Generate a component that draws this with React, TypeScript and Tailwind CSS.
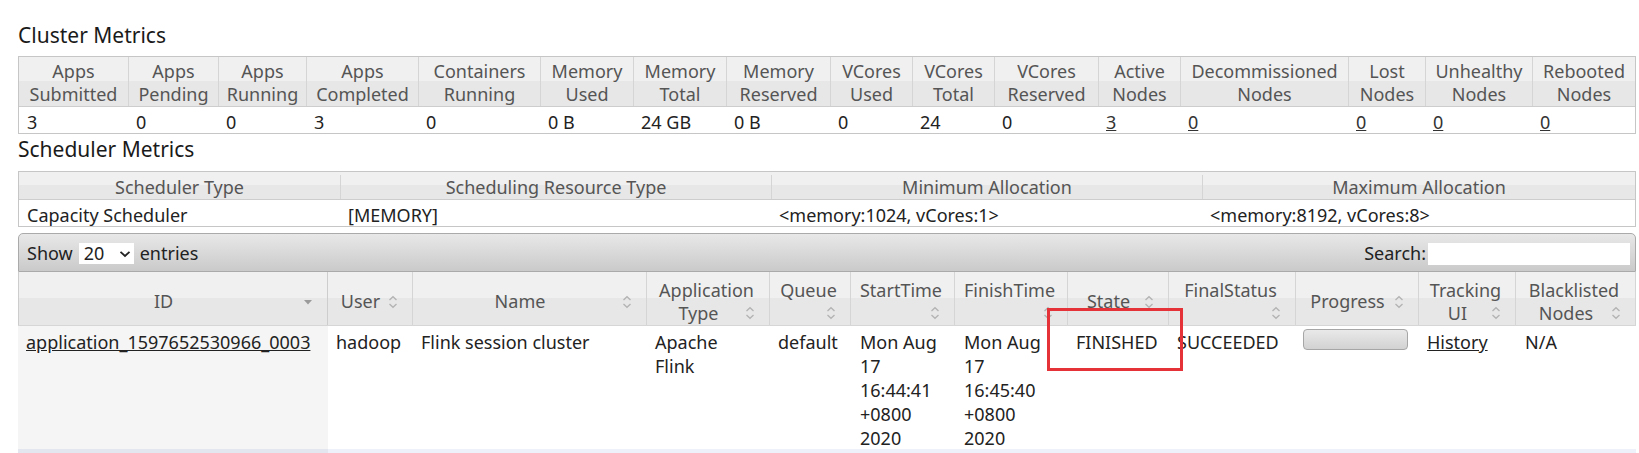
import React from "react";

const SortIcon = () => (
  <svg width="16" height="16" viewBox="0 0 16 16" className="shrink-0">
    <path d="M4.5 6 L8 2.7 L11.5 6" fill="none" stroke="#b3b3b3" strokeWidth="1.3" />
    <path d="M4.5 10 L8 13.3 L11.5 10" fill="none" stroke="#b3b3b3" strokeWidth="1.3" />
  </svg>
);

const SortDesc = () => (
  <svg width="16" height="16" viewBox="0 0 16 16" className="shrink-0">
    <path d="M4 6 L12 6 L8 10.5 Z" fill="#9a9a9a" />
  </svg>
);

const clusterHeads: [string, string][] = [
  ["Apps", "Submitted"],
  ["Apps", "Pending"],
  ["Apps", "Running"],
  ["Apps", "Completed"],
  ["Containers", "Running"],
  ["Memory", "Used"],
  ["Memory", "Total"],
  ["Memory", "Reserved"],
  ["VCores", "Used"],
  ["VCores", "Total"],
  ["VCores", "Reserved"],
  ["Active", "Nodes"],
  ["Decommissioned", "Nodes"],
  ["Lost", "Nodes"],
  ["Unhealthy", "Nodes"],
  ["Rebooted", "Nodes"],
];

const clusterVals: { v: string; link?: boolean }[] = [
  { v: "3" },
  { v: "0" },
  { v: "0" },
  { v: "3" },
  { v: "0" },
  { v: "0 B" },
  { v: "24 GB" },
  { v: "0 B" },
  { v: "0" },
  { v: "24" },
  { v: "0" },
  { v: "3", link: true },
  { v: "0", link: true },
  { v: "0", link: true },
  { v: "0", link: true },
  { v: "0", link: true },
];

type Head =
  | { kind: "single"; text: string; sorted?: boolean }
  | { kind: "double"; l1: string; l2: string };

const appHeads: Head[] = [
  { kind: "single", text: "ID", sorted: true },
  { kind: "single", text: "User" },
  { kind: "single", text: "Name" },
  { kind: "double", l1: "Application", l2: "Type" },
  { kind: "double", l1: "Queue", l2: "" },
  { kind: "double", l1: "StartTime", l2: "" },
  { kind: "double", l1: "FinishTime", l2: "" },
  { kind: "single", text: "State" },
  { kind: "double", l1: "FinalStatus", l2: "" },
  { kind: "single", text: "Progress" },
  { kind: "double", l1: "Tracking", l2: "UI" },
  { kind: "double", l1: "Blacklisted", l2: "Nodes" },
];

export default function App() {
  return (
    <div className="min-h-screen bg-white font-['Noto_Sans',sans-serif] text-[18px] text-[#222] pl-[18px] pt-[21px]">
      {/* Cluster Metrics */}
      <div className="h-[28px] leading-[28px] text-[21px] text-[#1a1a1a] mb-[7px]">Cluster Metrics</div>
      <div className="w-[1618px] border border-[#c6c6c6]">
        <div className="grid grid-cols-[109px_90px_88px_112px_122px_93px_93px_104px_82px_82px_104px_82px_168px_77px_107px_103px] h-[50px] border-b border-[#cdcdcd] bg-[linear-gradient(#f0f0f0_50%,#e7e7e7_50%)] text-[#555]">
          {clusterHeads.map((h, i) => (
            <div
              key={i}
              className={
                i > 0
                  ? "flex flex-col items-center justify-center leading-[23px] pt-[2px] border-l border-[#d5d5d5] whitespace-nowrap"
                  : "flex flex-col items-center justify-center leading-[23px] pt-[2px] whitespace-nowrap"
              }
            >
              <span>{h[0]}</span>
              <span>{h[1]}</span>
            </div>
          ))}
        </div>
        <div className="grid grid-cols-[109px_90px_88px_112px_122px_93px_93px_104px_82px_82px_104px_82px_168px_77px_107px_103px] h-[26px] leading-[24px]">
          {clusterVals.map((c, i) => (
            <div key={i} className="pl-[8px] pt-[3px] whitespace-nowrap">
              {c.link ? <span className="underline text-[#333]">{c.v}</span> : c.v}
            </div>
          ))}
        </div>
      </div>

      {/* Scheduler Metrics */}
      <div className="h-[28px] leading-[28px] pt-[1px] text-[21px] text-[#1a1a1a] mb-[9px]">Scheduler Metrics</div>
      <div className="w-[1618px] border border-[#c6c6c6]">
        <div className="grid grid-cols-[321px_431px_431px_433px] h-[28px] border-b border-[#cdcdcd] bg-[linear-gradient(#f0f0f0_50%,#e7e7e7_50%)] text-[#555] leading-[24px] pt-[3px]">
          <div className="text-center">Scheduler Type</div>
          <div className="text-center border-l border-[#d5d5d5]">Scheduling Resource Type</div>
          <div className="text-center border-l border-[#d5d5d5]">Minimum Allocation</div>
          <div className="text-center border-l border-[#d5d5d5]">Maximum Allocation</div>
        </div>
        <div className="grid grid-cols-[321px_431px_431px_433px] h-[26px] leading-[24px]">
          <div className="pl-[8px] pt-[3px]">Capacity Scheduler</div>
          <div className="pl-[8px] pt-[3px]">[MEMORY]</div>
          <div className="pl-[8px] pt-[3px]">&lt;memory:1024, vCores:1&gt;</div>
          <div className="pl-[8px] pt-[3px]">&lt;memory:8192, vCores:8&gt;</div>
        </div>
      </div>

      {/* Applications table */}
      <div className="relative w-[1618px] mt-[6px]">
        <div className="h-[39px] rounded-t-[5px] border border-[#aaaaaa] bg-[linear-gradient(#e8e8e8,#cacaca)] flex items-center justify-between pl-[8px] pr-[5px] pt-[2px]">
          <div className="flex items-center">
            <span>Show</span>
            <div className="ml-[6px] mr-[6px] w-[55px] h-[21px] bg-white flex items-center pl-[5px] leading-[21px]">
              <span>20</span>
              <svg width="12" height="8" viewBox="0 0 12 8" className="ml-[15px]">
                <path d="M1.5 1.8 L6 6 L10.5 1.8" fill="none" stroke="#222" strokeWidth="1.8" />
              </svg>
            </div>
            <span>entries</span>
          </div>
          <div className="flex items-center">
            <span>Search:</span>
            <div className="ml-[2px] w-[202px] h-[22px] bg-white" />
          </div>
        </div>

        <div className="grid grid-cols-[310px_85px_234px_123px_81px_104px_113px_101px_127px_123px_97px_120px] h-[54px] bg-[linear-gradient(#f0f0f0_50%,#e7e7e7_50%)] text-[#555] border-b border-[#d6d6d6]">
          {appHeads.map((h, i) => {
            const cellCls =
              i === 0
                ? "border-l border-r border-[#cdcdcd] h-full pl-[8px] pr-[11px] pt-[6px]"
                : "border-r border-[#d5d5d5] h-full pl-[8px] pr-[11px] pt-[6px]";
            if (h.kind === "single") {
              return (
                <div key={i} className={cellCls}>
                  <div className="flex items-center h-full">
                    <span className="flex-1 text-center whitespace-nowrap">{h.text}</span>
                    {h.sorted ? <SortDesc /> : <SortIcon />}
                  </div>
                </div>
              );
            }
            return (
              <div key={i} className={cellCls}>
                <div className="flex flex-col justify-center h-full leading-[23px]">
                  <div className="text-center whitespace-nowrap">{h.l1}</div>
                  <div className="flex items-center h-[23px]">
                    <span className="flex-1 text-center whitespace-nowrap">{h.l2}</span>
                    <SortIcon />
                  </div>
                </div>
              </div>
            );
          })}
        </div>

        <div className="grid grid-cols-[310px_85px_234px_123px_81px_104px_113px_101px_127px_123px_97px_120px] h-[123px] leading-[24px]">
          <div className="bg-[#f5f5f5] pl-[8px] pt-[4px] whitespace-nowrap">
            <span className="underline">application_1597652530966_0003</span>
          </div>
          <div className="pl-[8px] pt-[4px]">hadoop</div>
          <div className="pl-[8px] pt-[4px] whitespace-nowrap">Flink session cluster</div>
          <div className="pl-[8px] pt-[4px]">
            Apache
            <br />
            Flink
          </div>
          <div className="pl-[8px] pt-[4px]">default</div>
          <div className="pl-[9px] pt-[4px] whitespace-nowrap">
            Mon Aug
            <br />
            17
            <br />
            16:44:41
            <br />
            +0800
            <br />
            2020
          </div>
          <div className="pl-[9px] pt-[4px] whitespace-nowrap">
            Mon Aug
            <br />
            17
            <br />
            16:45:40
            <br />
            +0800
            <br />
            2020
          </div>
          <div className="pl-[8px] pt-[4px]">FINISHED</div>
          <div className="pl-[8px] pt-[4px]">SUCCEEDED</div>
          <div className="pl-[7px] pt-[3px]">
            <div className="w-[105px] h-[21px] rounded-[4px] border border-[#a6a6a6] bg-[linear-gradient(#e9e9e9,#d2d2d2)]" />
          </div>
          <div className="pl-[8px] pt-[4px]">
            <span className="underline">History</span>
          </div>
          <div className="pl-[9px] pt-[4px]">N/A</div>
        </div>

        <div className="grid grid-cols-[310px_1308px] h-[30px] bg-[#eef0fa]">
          <div className="bg-[#e4e6ef]" />
          <div />
        </div>

        <div className="absolute left-[1029px] top-[75px] w-[136px] h-[63px] border-[3px] border-[#e53238]" />
      </div>
    </div>
  );
}
